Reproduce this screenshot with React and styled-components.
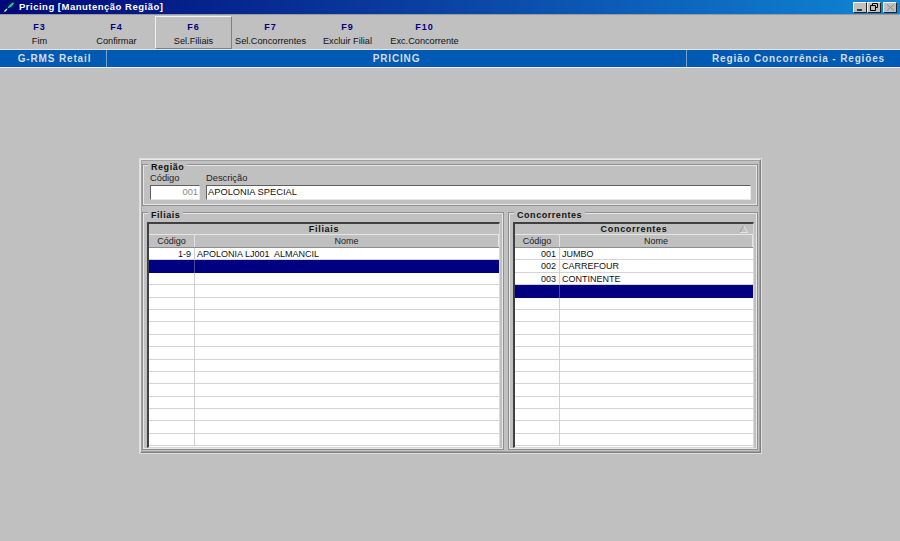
import React from "react";
import styled, { createGlobalStyle } from "styled-components";

const Global = createGlobalStyle`
  html, body { margin: 0; padding: 0; background: #c0c0c0; }
  body { font-family: "Liberation Sans", Arial, sans-serif; }
`;
const Page = styled.div`
  width: 900px; height: 541px; background: #c0c0c0; overflow: hidden;
  display: flex; flex-direction: column;
`;
const TitleBar = styled.div`
  height: 14px; flex: none; box-sizing: content-box; display: flex; align-items: center; justify-content: space-between;
  background: linear-gradient(90deg, #00087a 0%, #0a3da0 45%, #0f86d4 100%);
  color: #fff; font-size: 9.5px; font-weight: bold; letter-spacing: .5px; line-height: 13px;
`;
const TitleLeft = styled.div`display: flex; align-items: center; gap: 3px; padding: 0 0 1px 3px;`;
const WinButtons = styled.div`display: flex; align-items: center; padding-right: 3px;`;
const WinBtn = styled.div`
  width: 14px; height: 11px; background: #c0c0c0; margin-left: ${p => p.$gap || 0}px;
  border: 1px solid; border-color: #f4f4f4 #222 #222 #f4f4f4; box-sizing: border-box;
  display: flex; align-items: center; justify-content: center;
`;
const Toolbar = styled.div`
  height: 36px; flex: none; display: flex; padding: 1px 0 0 1px; box-sizing: border-box;
  border-top: 1px solid #9a9a9a; border-bottom: 1px solid #e4e4e4;
`;
const ToolButton = styled.div`
  width: 77px; height: 33px; box-sizing: border-box; display: flex; flex-direction: column; align-items: center;
  padding-top: ${p => p.$active ? 4 : 5}px;
  ${p => p.$active && "border: 1px solid; border-color: #f2f2f2 #808080 #808080 #f2f2f2;"}
`;
const Key = styled.div`color: #000080; font-size: 9px; font-weight: bold; line-height: 12px; letter-spacing: 1px;`;
const Action = styled.div`color: #111; font-size: 9.2px; line-height: 12px; margin-top: 2px; white-space: nowrap;`;
const Banner = styled.div`
  height: 17px; flex: none; display: flex; background: #0059b3; color: #d4dde8;
  font-size: 10px; font-weight: bold; letter-spacing: .85px; line-height: 17px;
  border-bottom: 1px solid #eef;
`;
const BannerCell = styled.div`
  box-sizing: border-box; width: ${p => p.$w}px; text-align: center; flex: ${p => p.$w ? "none" : 1};
  padding-left: ${p => p.$pad || 0}px;
  border-right: ${p => p.$line ? "1px solid #78a2d2" : "none"};
`;
const Content = styled.div`flex: 1; display: flex; padding: 91px 0 0 140px;`;
const Panel = styled.div`
  width: 621px; height: 294px; box-sizing: border-box; padding: 4px 0 0 1px;
  border: 1px solid; border-color: #e8e8e8 #808080 #808080 #e8e8e8;
  box-shadow: inset 0 0 0 1px #a0a0a0, 0 0 0 1px #ddd;
  display: flex; flex-direction: column; gap: 6px;
`;
const Group = styled.fieldset`
  margin: 0; padding: 0; box-sizing: border-box; min-width: 0; position: relative;
  border: 1px solid #909090; box-shadow: inset 0 0 0 1px #e6e6e6;
  width: ${p => p.$w}px; height: ${p => p.$h}px; flex: none;
`;
const Legend = styled.div`
  position: absolute; left: 5px; top: -3px; background: #c0c0c0; padding: 0 3px;
  font-size: 9px; font-weight: bold; color: #111; line-height: 10px; letter-spacing: .55px;
`;
const RegionBody = styled.div`display: flex; gap: 6px; padding: 7px 0 0 7px;`;
const Field = styled.div`display: flex; flex-direction: column;`;
const Label = styled.div`font-size: 9.3px; color: #222; line-height: 13px; height: 13px;`;
const Input = styled.div`
  box-sizing: border-box; height: 15px; width: ${p => p.$w}px; background: #fff; font-size: 9.3px; line-height: 13px;
  color: ${p => p.$muted ? "#888" : "#111"}; text-align: ${p => p.$muted ? "right" : "left"}; padding: 0 1px;
  border: 1px solid; border-color: #606060 #e8e8e8 #e8e8e8 #606060;
`;
const Columns = styled.div`display: flex; gap: 4px;`;
const GridBox = styled.div`
  box-sizing: border-box; position: absolute; left: 4px; top: 9px; width: ${p => p.$w}px; height: 226px; overflow: hidden;
  border-top: 2px solid #404040; border-left: 2px solid #404040; background: #fff;
  border-right: 1px solid #d8d8d8; border-bottom: 1px solid #d8d8d8;
`;
const GridTitle = styled.div`
  height: 11px; line-height: 11px; background: #c0c0c0; text-align: center; font-size: 9px; font-weight: bold; letter-spacing: .7px;
  color: #111; border-bottom: 1px solid #e6e6e6; box-sizing: border-box; position: relative;
`;
const SortMark = styled.svg`position: absolute; right: 5px; top: 1px;`;
const HeadRow = styled.div`
  display: grid; grid-template-columns: ${p => p.$code}px 1fr; height: 13px; background: #c0c0c0; border-bottom: 1px solid #8c8c8c;
  box-sizing: border-box;
`;
const HeadCell = styled.div`
  font-size: 9px; line-height: 12px; text-align: center; color: #222; border-right: 1px solid #e4e4e4;
`;
const Rows = styled.div`display: grid; grid-auto-rows: 12.4px;`;
const Row = styled.div`
  display: grid; grid-template-columns: ${p => p.$code}px 1fr; background: ${p => p.$sel ? "#000080" : "#fff"};
  box-shadow: inset 0 -1px 0 ${p => p.$sel ? "#000080" : "#d4d4d4"};
`;
const CodeCell = styled.div`
  font-size: 9px; line-height: 12px; color: #111; white-space: pre; padding-right: 4px; text-align: right;
  box-shadow: inset -1px 0 0 ${p => p.$sel ? "#4a4a9a" : "#d0d0d0"};
`;
const NameCell = styled.div`
  font-size: 9px; line-height: 12px; color: #111; white-space: pre; padding-left: 2px;
`;

const Grid = ({ title, width, code, rows, selected, sort }) => (
  <GridBox $w={width}>
    <GridTitle>
      {title}
      {sort && (
        <SortMark width="9" height="8" viewBox="0 0 9 8">
          <path d="M4.5 0.5 L8.5 7.5 L0.5 7.5 Z" fill="none" stroke="#e4e4e4" />
          <path d="M4.5 0.5 L0.5 7.5" fill="none" stroke="#909090" />
        </SortMark>
      )}
    </GridTitle>
    <HeadRow $code={code}><HeadCell>Código</HeadCell><HeadCell>Nome</HeadCell></HeadRow>
    <Rows>
      {Array.from({ length: 16 }, (_, i) => (
        <Row key={i} $sel={i === selected} $code={code}>
          <CodeCell $sel={i === selected}>{rows[i]?.[0]}</CodeCell>
          <NameCell>{rows[i]?.[1]}</NameCell>
        </Row>
      ))}
    </Rows>
  </GridBox>
);

const keys = [
  ["F3", "Fim"], ["F4", "Confirmar"], ["F6", "Sel.Filiais", true], ["F7", "Sel.Concorrentes"],
  ["F9", "Excluir Filial"], ["F10", "Exc.Concorrente"],
];

export default function App() {
  return (
    <Page>
      <Global />
      <TitleBar>
        <TitleLeft>
          <svg width="13" height="11" viewBox="0 0 13 11">
            <path d="M3.5 8.5 L5 5 L9.5 1 L12 1.5 L9 6 Z" fill="#14c4b4" stroke="#04142c" strokeWidth="1" />
            <path d="M1.5 10.5 L4 8" stroke="#e4ffff" strokeWidth="1.2" />
          </svg>
          Pricing [Manutenção Região]
        </TitleLeft>
        <WinButtons>
          <WinBtn>
            <svg width="10" height="7" viewBox="0 0 10 7"><path d="M2 6 H7" stroke="#000" strokeWidth="1.4" /></svg>
          </WinBtn>
          <WinBtn>
            <svg width="10" height="8" viewBox="0 0 10 8">
              <path d="M3.5 .5 H8.5 V4.5 H6.5 M3.5 .5 V2.5" fill="none" stroke="#000" />
              <path d="M1.5 2.5 H6.5 V7.5 H1.5 Z" fill="none" stroke="#000" />
            </svg>
          </WinBtn>
          <WinBtn $gap={2}>
            <svg width="9" height="7" viewBox="0 0 9 7"><path d="M1 .5 L8 6.5 M8 .5 L1 6.5" stroke="#8a8a8a" /></svg>
          </WinBtn>
        </WinButtons>
      </TitleBar>
      <Toolbar>
        {keys.map(([k, a, active]) => (
          <ToolButton key={k} $active={active}>
            <Key>{k}</Key>
            <Action>{a}</Action>
          </ToolButton>
        ))}
      </Toolbar>
      <Banner>
        <BannerCell $w={107} $line $pad={3}>G-RMS Retail</BannerCell>
        <BannerCell $w={580} $line>PRICING</BannerCell>
        <BannerCell $pad={10}>Região Concorrência - Regiões</BannerCell>
      </Banner>
      <Content>
        <Panel>
          <Group $w={616} $h={42}>
            <Legend>Região</Legend>
            <RegionBody>
              <Field><Label>Código</Label><Input $w={50} $muted>001</Input></Field>
              <Field><Label>Descrição</Label><Input $w={545}>APOLONIA SPECIAL</Input></Field>
            </RegionBody>
          </Group>
          <Columns>
            <Group $w={362} $h={238}>
              <Legend>Filiais</Legend>
              <Grid title="Filiais" width={353} code={46} selected={1} rows={[["1-9", "APOLONIA LJ001  ALMANCIL"]]} />
            </Group>
            <Group $w={250} $h={238}>
              <Legend>Concorrentes</Legend>
              <Grid title="Concorrentes" width={241} code={45} selected={3} sort rows={[["001", "JUMBO"], ["002", "CARREFOUR"], ["003", "CONTINENTE"]]} />
            </Group>
          </Columns>
        </Panel>
      </Content>
    </Page>
  );
}
